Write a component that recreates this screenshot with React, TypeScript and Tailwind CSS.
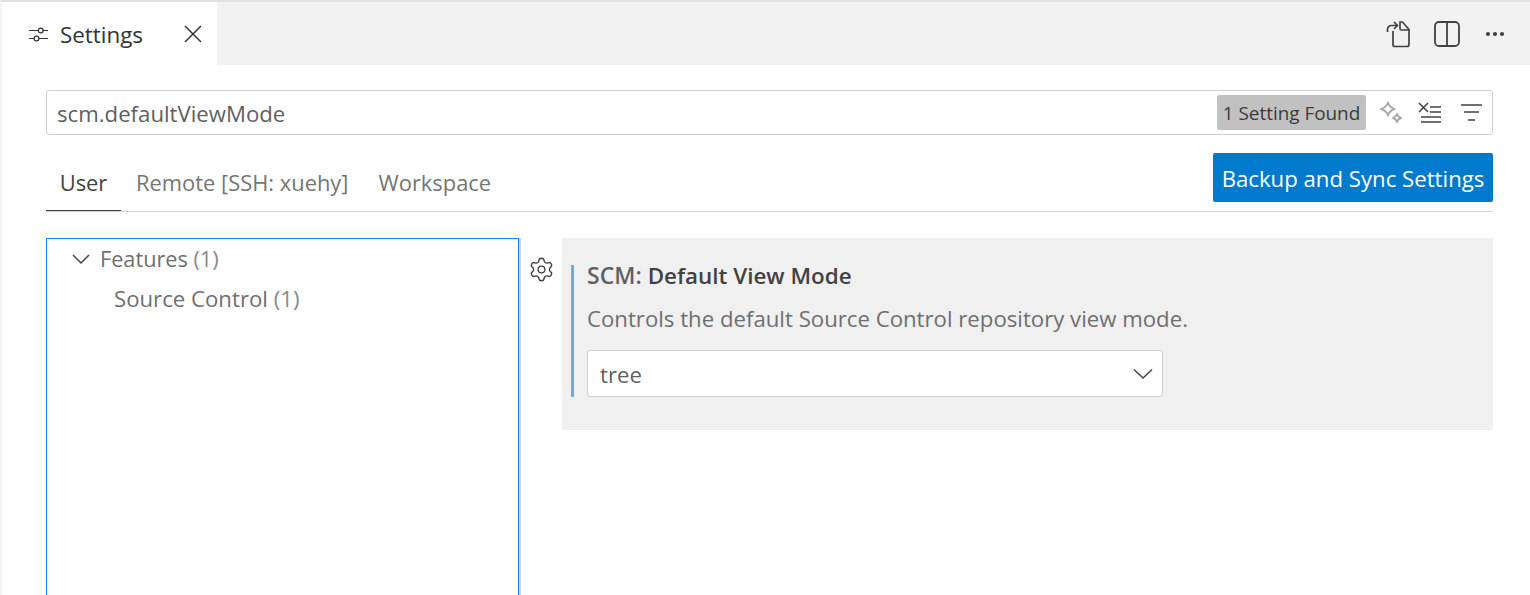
import React from "react";
import { Settings } from "lucide-react";

const App: React.FC = () => {
  return (
    <div className="flex h-[595px] w-[1530px] flex-col overflow-hidden border-t-2 border-l-2 border-t-[#e0e0e0] border-l-[#f3f3f3] bg-white font-['Open_Sans',sans-serif] text-[22.2px] text-[#616161]">
      {/* Tab bar */}
      <div className="flex h-[63px] shrink-0 items-center justify-between bg-[#f2f2f2] pr-[25px]">
        <div className="flex h-full w-[215px] items-center bg-white pl-[27px] text-[#333333]">
          <svg width="20" height="20" viewBox="0 0 20 20" fill="none" stroke="#333" strokeWidth="1.2">
            <path d="M0 6.500h9M14 6.500h5M0 14.500h5M10 14.500h9" />
            <circle cx="11.700" cy="6.500" r="2.400" />
            <circle cx="7.500" cy="14.500" r="2.400" />
          </svg>
          <span className="ml-[11px] w-[124px] pt-[3px] text-[22.4px] leading-none">Settings</span>
          <svg width="18" height="18" viewBox="0 0 18 18" fill="none" stroke="#333" strokeWidth="1.5">
            <path d="M1 1l16 16M17 1L1 17" />
          </svg>
        </div>
        <div className="flex items-center">
          <svg width="26" height="28" viewBox="0 0 26 28" fill="none" stroke="#424242" strokeWidth="1.7">
            <path d="M7 11v13.500a2 2 0 0 0 2 2h12a2 2 0 0 0 2-2V9.500L16.500 2H14v6.500a1.500 1.500 0 0 0 1.500 1.500H23" />
            <path d="M1.500 12V9.500a4 4 0 0 1 4-4H11M8 2l3.500 3.500L8 9" />
          </svg>
          <svg className="ml-[22px]" width="26" height="26" viewBox="0 0 26 26" fill="none" stroke="#424242" strokeWidth="1.8">
            <rect x="1" y="1" width="24" height="24" rx="4" />
            <path d="M13 1v24" />
          </svg>
          <svg className="ml-[25px]" width="20" height="6" viewBox="0 0 20 6" fill="#424242">
            <circle cx="3" cy="3" r="2.100" />
            <circle cx="10" cy="3" r="2.100" />
            <circle cx="17" cy="3" r="2.100" />
          </svg>
        </div>
      </div>

      <div className="flex min-h-0 flex-1 flex-col pr-[37px] pl-[44px]">
        {/* Search box */}
        <div className="mt-[25px] flex h-[45px] shrink-0 items-center rounded-[3px] border border-[#cecece] pr-[9px] pl-[10px]">
          <span className="flex-1 pt-[2px] text-[#5f5f5f]">scm.defaultViewMode</span>
          <span className="flex h-[35px] w-[149px] items-center justify-center rounded-[2px] bg-[#c1c1c1] pt-[1px] text-[18.9px] text-[#3b3b3b]">
            1 Setting Found
          </span>
          <svg className="ml-[13px]" width="25" height="24" viewBox="0 0 25 24" fill="none" stroke="#aaaaaa" strokeWidth="2" strokeLinejoin="round">
            <path d="M9 1.500c.8 3.200 2.600 5.200 6.500 6.500-3.800 1.400-5.600 3.300-6.500 6.500C8 11.300 6.200 9.300 2 8c4.200-1.300 6-3.300 7-6.500z" />
            <path d="M18 13c.5 1.800 1.600 3 4 4-2.400.9-3.500 2.100-4 4-.6-1.900-1.700-3.100-4-4 2.300-1 3.400-2.200 4-4z" />
          </svg>
          <svg className="ml-[14px]" width="24" height="22" viewBox="0 0 24 22" fill="none" stroke="#424242" strokeWidth="1.500">
            <path d="M1 1l9 9M10 1l-9 9" />
            <path d="M12 5h11M12 10h11M3 15h20M3 20h20" />
          </svg>
          <svg className="ml-[18px]" width="23" height="20" viewBox="0 0 23 20" fill="none" stroke="#424242" strokeWidth="1.700">
            <path d="M1 2h21M4 9h15M8 17h7" />
          </svg>
        </div>

        {/* Scope tabs */}
        <div className="mt-[18px] flex h-[59px] shrink-0 items-end justify-between border-b border-[#d4d4d4] text-[21.9px]">
          <div className="flex">
            <div className="-mb-px flex h-[45px] w-[75px] items-center justify-center border-b border-[#424242] pb-[10px] text-[#424242]">User</div>
            <div className="flex h-[45px] items-center pb-[10px] pl-[15px] text-[#757575]">Remote [SSH: xuehy]</div>
            <div className="flex h-[45px] items-center pb-[10px] pl-[30px] text-[#757575]">Workspace</div>
          </div>
          <div className="mb-[9px] flex h-[49px] w-[280px] items-center justify-center rounded-[2px] bg-[#007acc] pt-[2px] text-[22.2px] text-white">
            Backup and Sync Settings
          </div>
        </div>

        {/* Body */}
        <div className="mt-[26px] flex min-h-0 flex-1">
          <div className="h-[400px] w-[473px] shrink-0 border border-[#0090f1] text-[#6f6f6f] shadow-[2px_0_0_#d4d4d4]">
            <div className="flex h-[40px] items-center pl-[25px]">
              <svg width="18" height="11" viewBox="0 0 18 11" fill="none" stroke="#424242" strokeWidth="1.500">
                <path d="M1 1l8 8 8-8" />
              </svg>
              <span className="ml-[10px] text-[21.7px]">Features <span className="text-[#8a8a8a]">(1)</span></span>
            </div>
            <div className="flex h-[40px] items-center pl-[67px]">
              <span>Source Control <span className="text-[#8a8a8a]">(1)</span></span>
            </div>
          </div>
          <div className="flex w-[43px] shrink-0 justify-center pt-[18px] pl-[2px]">
            <Settings size={27} color="#424242" strokeWidth={1.2} />
          </div>
          <div className="h-[192px] flex-1 bg-[#f0f0f0] pt-[27px] pl-[9px]">
            <div className="flex h-[132px] flex-col border-l-[3px] border-[#6caddf] pl-[13px]">
              <div className="h-[22px] shrink-0 leading-[20px] text-[#616161]">
                <span className="text-[23px] font-semibold">SCM: </span>
                <span className="text-[22.4px] font-semibold text-[#424242]">Default View Mode</span>
              </div>
              <div className="mt-[21px] leading-[22px] text-[#6f6f6f]">Controls the default Source Control repository view mode.</div>
              <div className="mt-[20px] flex h-[47px] w-[576px] shrink-0 items-center justify-between rounded-[3px] border border-[#cecece] bg-white pr-[9px] pl-[12px] text-[#616161]">
                <span className="pt-[3px]">tree</span>
                <svg width="20" height="12" viewBox="0 0 20 12" fill="none" stroke="#424242" strokeWidth="1.500">
                  <path d="M1 1.500L10 10l9-8.500" />
                </svg>
              </div>
            </div>
          </div>
        </div>
      </div>
    </div>
  );
};

export default App;
